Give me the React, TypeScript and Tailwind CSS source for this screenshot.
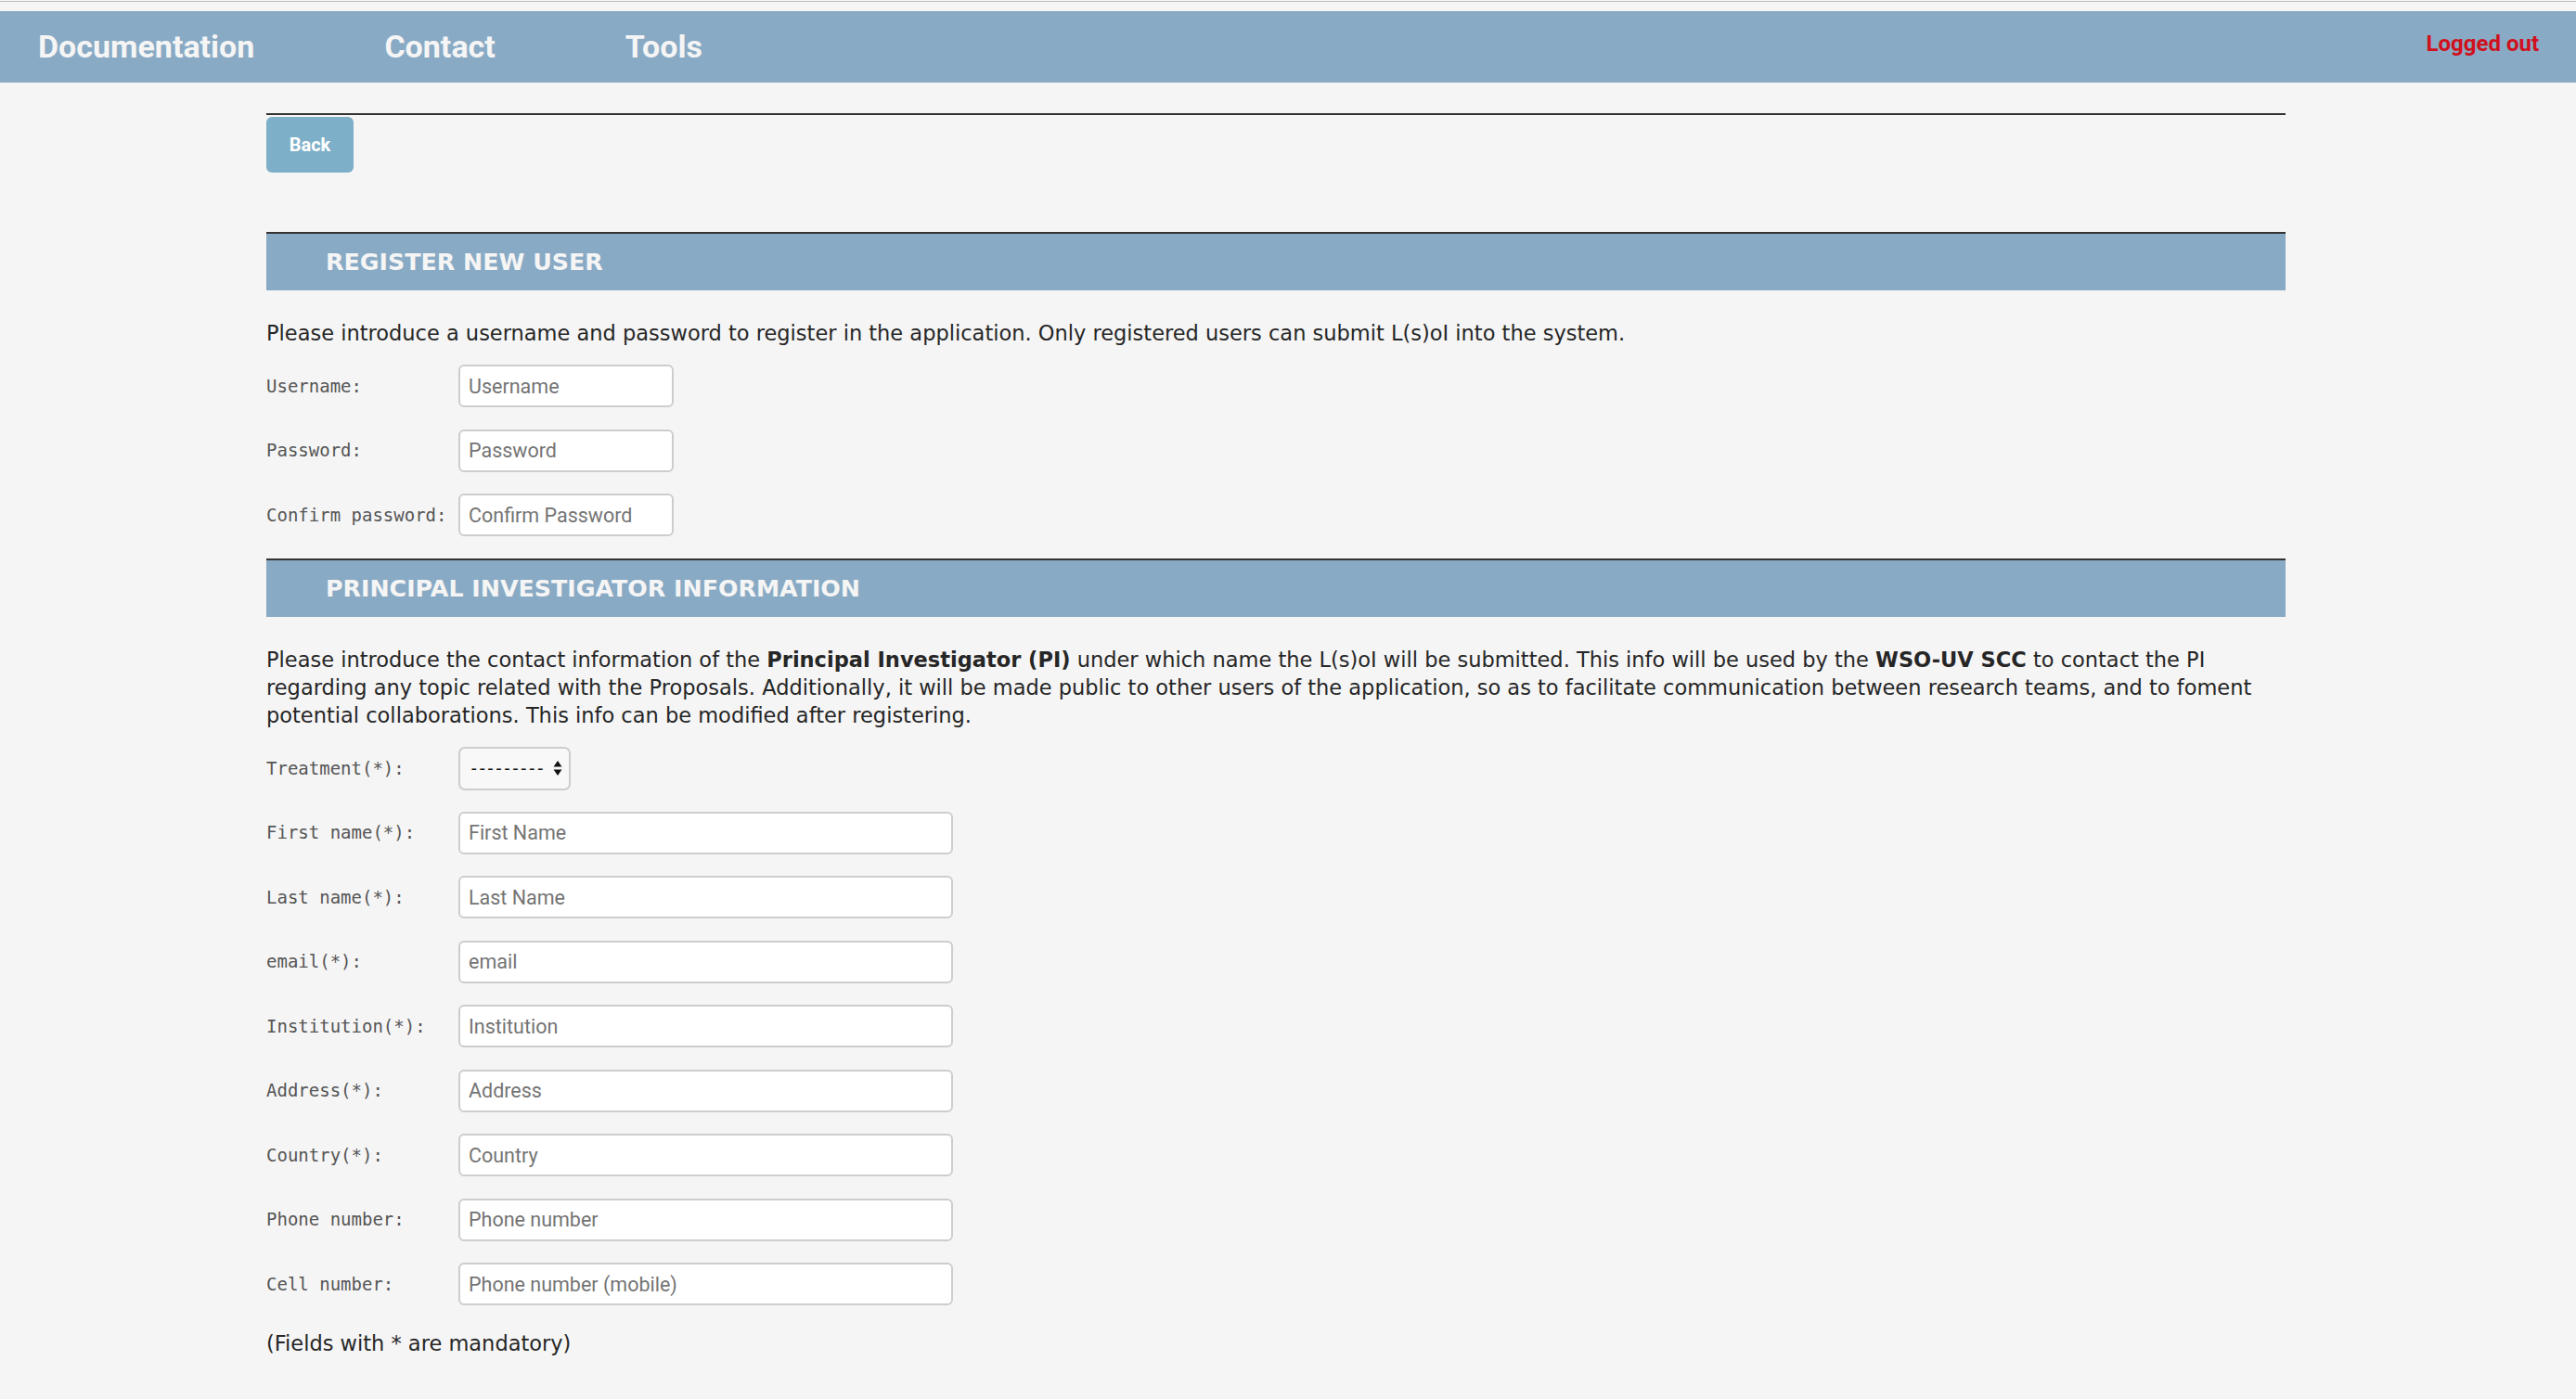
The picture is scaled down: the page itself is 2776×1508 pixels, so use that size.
import React from "react";

const bodyFont = "font-['DejaVu_Sans',Verdana,sans-serif]";
const monoFont = "font-['DejaVu_Sans_Mono',monospace]";

function SelectArrows() {
  return (
    <svg width="10" height="18" viewBox="0 0 10 18" className="shrink-0">
      <path d="M5 1 L9.5 7.5 L0.5 7.5 Z" fill="#111" />
      <path d="M5 17 L9.5 10.5 L0.5 10.5 Z" fill="#111" />
    </svg>
  );
}

function Field({
  label,
  placeholder,
  wide,
}: {
  label: string;
  placeholder: string;
  wide?: boolean;
}) {
  return (
    <div className="flex items-center h-[46px]">
      <label className={`${monoFont} w-[207px] shrink-0 text-[19px] text-[#555]`}>{label}</label>
      <input
        type="text"
        placeholder={placeholder}
        className={`${wide ? "w-[533px]" : "w-[232px]"} h-[46px] rounded-[6px] border-2 border-[#cdcdcd] bg-white px-[9px] font-['Roboto',sans-serif] text-[21.5px] text-[#333] placeholder:text-[#747474] outline-none`}
      />
    </div>
  );
}

function SectionHeader({ title }: { title: string }) {
  return (
    <div className="border-t-2 border-[#333] bg-[#89aac4] h-[63px] flex items-center pl-[64px]">
      <span className="font-['DejaVu_Sans',Verdana,sans-serif] font-bold text-[25.3px] text-[#f5f5f5] leading-none">
        {title}
      </span>
    </div>
  );
}

export default function App() {
  const piFields: { label: string; placeholder: string }[] = [
    { label: "First name(*):", placeholder: "First Name" },
    { label: "Last name(*):", placeholder: "Last Name" },
    { label: "email(*):", placeholder: "email" },
    { label: "Institution(*):", placeholder: "Institution" },
    { label: "Address(*):", placeholder: "Address" },
    { label: "Country(*):", placeholder: "Country" },
    { label: "Phone number:", placeholder: "Phone number" },
    { label: "Cell number:", placeholder: "Phone number (mobile)" },
  ];

  return (
    <div className="min-h-screen bg-[#f5f5f5] text-[#333]">
      {/* top edge */}
      <div className="h-[1px] bg-[#f5f5f5]" />
      <div className="h-[1px] bg-[#bdbdbd]" />
      <div className="h-[10px]" />

      {/* navigation bar */}
      <nav className="h-[77px] bg-[#89aac4] flex items-start justify-between">
        <div className="flex items-center h-full pl-[41px] gap-[140px] font-['Roboto',sans-serif] font-bold text-[34px] text-[#f5f5f5]">
          <a href="#" className="leading-none pb-[1px]">Documentation</a>
          <a href="#" className="leading-none pb-[1px]">Contact</a>
          <a href="#" className="leading-none pb-[1px]">Tools</a>
        </div>
        <span className="pt-[19px] pr-[40px] font-['Roboto',sans-serif] font-bold text-[24px] leading-[32px] text-[#d0101c]">
          Logged out
        </span>
      </nav>

      <main className="ml-[287px] w-[2176px] pb-[45px]">
        <div className="mt-[33px] h-[2px] bg-[#333]" />
        <button className="mt-[2px] h-[60px] w-[94px] rounded-[6px] bg-[#7eafc8] font-['Roboto',sans-serif] font-bold text-[20px] text-white">
          Back
        </button>

        <div className="mt-[64px]">
          <SectionHeader title="REGISTER NEW USER" />
        </div>

        <p className={`${bodyFont} mt-[31px] text-[22.5px] leading-[30px] text-[#262626]`}>
          Please introduce a username and password to register in the application. Only registered users can submit L(s)oI into the system.
        </p>

        <div className="mt-[19px] flex flex-col gap-[23.5px]">
          <Field label="Username:" placeholder="Username" />
          <Field label="Password:" placeholder="Password" />
          <Field label="Confirm password:" placeholder="Confirm Password" />
        </div>

        <div className="mt-[24px]">
          <SectionHeader title="PRINCIPAL INVESTIGATOR INFORMATION" />
        </div>

        <p className={`${bodyFont} mt-[31px] text-[22.5px] leading-[30px] text-[#262626]`}>
          Please introduce the contact information of the <b>Principal Investigator (PI)</b> under which name the L(s)oI will be submitted. This info will be used by the <b>WSO-UV SCC</b> to contact the PI
          <br />
          regarding any topic related with the Proposals. Additionally, it will be made public to other users of the application, so as to facilitate communication between research teams, and to foment
          <br />
          potential collaborations. This info can be modified after registering.
        </p>

        <div className="mt-[19px] flex flex-col gap-[23.5px]">
          <div className="flex items-center h-[46px]">
            <label className={`${monoFont} w-[207px] shrink-0 text-[19px] text-[#555]`}>Treatment(*):</label>
            <div className="w-[121px] h-[47px] rounded-[7px] border-2 border-[#cdcdcd] bg-[#f8f8f8] flex items-center justify-between pl-[12px] pr-[7px]">
              <span className="font-['Roboto',sans-serif] text-[20px] text-[#111] tracking-[3.4px]">---------</span>
              <SelectArrows />
            </div>
          </div>
          {piFields.map((f) => (
            <Field key={f.label} label={f.label} placeholder={f.placeholder} wide />
          ))}
        </div>

        <p className={`${bodyFont} mt-[26px] text-[22.5px] leading-[30px] text-[#262626]`}>
          (Fields with * are mandatory)
        </p>
      </main>
    </div>
  );
}
